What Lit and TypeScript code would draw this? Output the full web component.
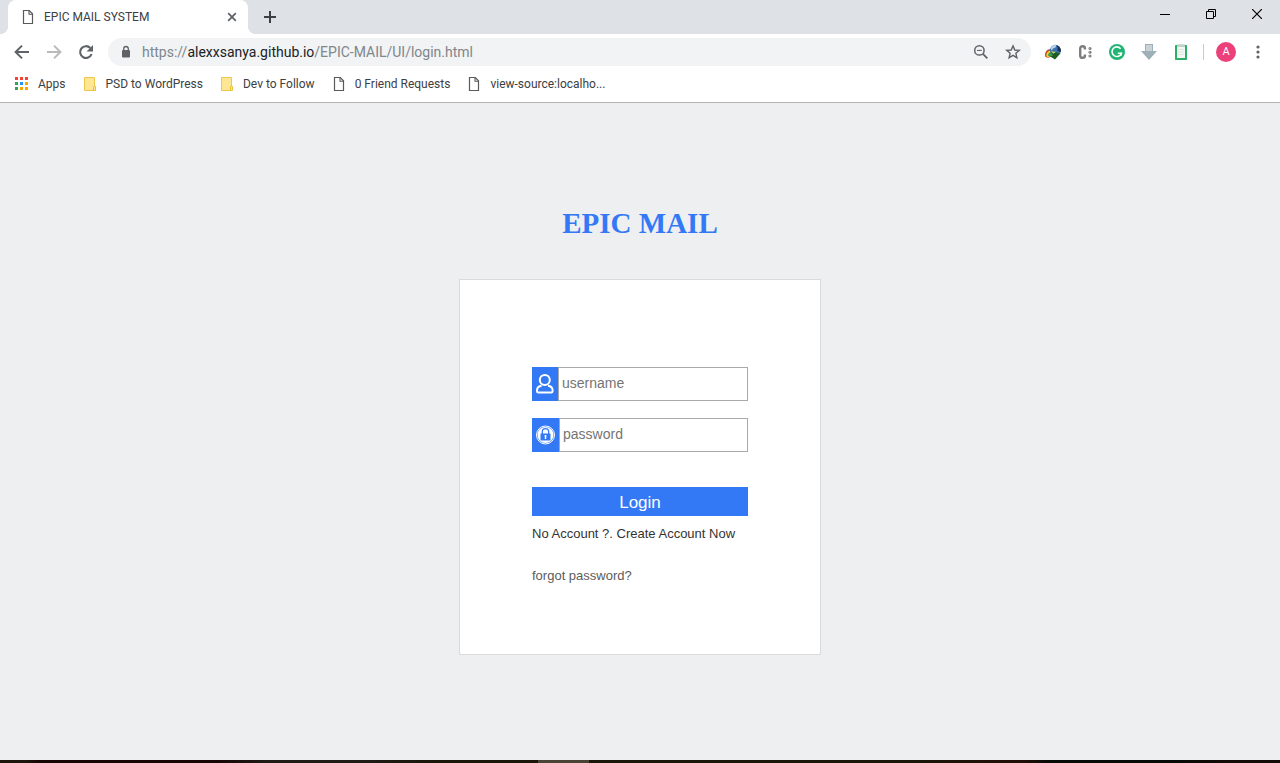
import { LitElement, html, css, svg } from "lit";
import { customElement, property } from "lit/decorators.js";

const pageIcon = html`<svg width="16" height="16" viewBox="0 0 16 16" fill="none" stroke="#5a5a5a" stroke-width="1.2" aria-hidden="true">
  <path d="M3.5 1.5H9.3L12.5 4.8V14.5H3.5Z" /><path d="M9 1.5V5.2H12.5" stroke-width="1.1" />
</svg>`;

const folderIcon = html`<svg width="16" height="16" viewBox="0 0 16 16" aria-hidden="true">
  <path d="M2.5 1.5H12.5V11L13.5 14.5H2.5Z" fill="#ffe694" stroke="#ecc94b" />
  <path d="M11.5 14.5V11.2Q11.5 10.5 12.2 10.5H13.6V13.2Q13.6 14.5 12.4 14.5Z" fill="#ffe694" stroke="#e8bf32" />
</svg>`;

const appColors = ["#f44336", "#f44336", "#f44336", "#34a058", "#2196f3", "#f4a800", "#34a058", "#f4a800", "#f4a800"];
const appsIcon = html`<svg width="16" height="16" viewBox="0 0 16 16" shape-rendering="crispEdges" aria-hidden="true">
  ${appColors.map((c, i) => svg`<rect x=${1 + (i % 3) * 5} y=${1 + Math.floor(i / 3) * 5} width="3" height="3" fill=${c} />`)}
</svg>`;

@customElement("browser-tabs")
class BrowserTabs extends LitElement {
  @property() heading = "";

  static styles = css`
    :host { display: flex; height: 34px; background: #dee1e6; font: 12px/16px Roboto, "Noto Sans", sans-serif; }
    .tab { position: relative; box-sizing: border-box; display: flex; align-items: center; gap: 8px; width: 240px; margin-left: 8px; padding: 0 8px 0 12px; background: #fff; border-radius: 8px 8px 0 0; color: #3c4043; }
    .tab::before, .tab::after { content: ""; position: absolute; bottom: 0; width: 8px; height: 8px; }
    .tab::before { left: -8px; background: radial-gradient(circle at 0 0, transparent 8px, #fff 8px); }
    .tab::after { right: -8px; background: radial-gradient(circle at 100% 0, transparent 8px, #fff 8px); }
    .title { flex: 1; white-space: nowrap; }
    button { display: flex; align-items: center; justify-content: center; border: 0; padding: 0; background: none; }
    .close { width: 16px; height: 16px; }
    .add { width: 28px; margin-left: 8px; }
    .controls { display: flex; margin-left: auto; height: 28px; }
    .controls button { width: 46px; }
  `;

  render() {
    return html`
      <div class="tab">
        ${pageIcon}
        <span class="title">${this.heading}</span>
        <button class="close" aria-label="Close tab">
          <svg width="10" height="10" viewBox="0 0 10 10" stroke="#5f6368" stroke-width="1.8"><path d="M1.2 1.2L8.8 8.8M8.8 1.2L1.2 8.8" /></svg>
        </button>
      </div>
      <button class="add" aria-label="New tab">
        <svg width="14" height="14" viewBox="0 0 14 14" stroke="#3c4043" stroke-width="2"><path d="M7 1V13M1 7H13" /></svg>
      </button>
      <div class="controls">
        <button aria-label="Minimize"><svg width="10" height="10" viewBox="0 0 10 10"><path d="M0 5.5H10" stroke="#000" /></svg></button>
        <button aria-label="Restore"><svg width="10" height="10" viewBox="0 0 10 10" fill="none" stroke="#000"><path d="M.5 2.5H7.5V9.5H.5ZM2.5 2.5V.5H9.5V7.5H7.5" /></svg></button>
        <button aria-label="Close window"><svg width="10" height="10" viewBox="0 0 10 10" stroke="#000" stroke-width="1.2"><path d="M0 0L10 10M10 0L0 10" /></svg></button>
      </div>
    `;
  }
}

@customElement("browser-toolbar")
class BrowserToolbar extends LitElement {
  static styles = css`
    :host { display: flex; align-items: center; height: 36px; padding: 0 6px; background: #fff; }
    button { display: flex; align-items: center; justify-content: center; flex: none; width: 32px; height: 28px; border: 0; padding: 0; background: none; }
    .address { flex: 1; display: flex; align-items: center; height: 28px; margin: 0 6px; padding: 0 2px 0 12px; border-radius: 14px; background: #f1f3f4; font: 14px/20px Roboto, "Noto Sans", sans-serif; color: #80868b; white-space: nowrap; }
    .address b { font-weight: 400; color: #202124; }
    .url { flex: 1; margin-left: 10px; }
    .divider { width: 1px; height: 16px; margin: 0 6px; background: #c8cacc; }
    .avatar span { width: 20px; border-radius: 50%; background: #ec407a; color: #fff; font: 11px/20px Roboto, sans-serif; }
  `;

  render() {
    return html`
      <button aria-label="Back"><svg width="16" height="16" viewBox="0 0 16 16" fill="none" stroke="#5f6368" stroke-width="2"><path d="M15 8H2.4M8 1.6L1.6 8L8 14.4" /></svg></button>
      <button aria-label="Forward"><svg width="16" height="16" viewBox="0 0 16 16" fill="none" stroke="#bababa" stroke-width="2"><path d="M1 8H13.6M8 1.6L14.4 8L8 14.4" /></svg></button>
      <button aria-label="Reload"><svg width="16" height="16" viewBox="0 0 16 16"><path d="M13.6 10A5.9 5.9 0 1 1 12.3 4" fill="none" stroke="#5f6368" stroke-width="2.1" /><path d="M15 1V7.4H8.6Z" fill="#5f6368" /></svg></button>
      <div class="address">
        <svg width="12" height="14" viewBox="0 0 12 14"><rect x="2" y="5" width="8" height="7.5" rx="1" fill="#5f6368" /><path d="M3.7 5.5V3.8A2.3 2.3 0 0 1 8.3 3.8V5.5" fill="none" stroke="#5f6368" stroke-width="1.3" /></svg>
        <span class="url">https://<b>alexxsanya.github.io</b>/EPIC-MAIL/UI/login.html</span>
        <button aria-label="Zoom"><svg width="16" height="16" viewBox="0 0 16 16" fill="none" stroke="#5f6368" stroke-width="1.5"><circle cx="6.4" cy="6.4" r="4.7" /><path d="M9.9 9.9L14.3 14.3" stroke-width="1.8" /><path d="M4 6.4H8.8" stroke-width="1.1" /></svg></button>
        <button aria-label="Bookmark this page"><svg width="16" height="16" viewBox="0 0 16 16"><path d="M8 1.9L9.8 6L14.3 6.4L10.9 9.3L11.9 13.7L8 11.4L4.1 13.7L5.1 9.3L1.7 6.4L6.2 6Z" fill="none" stroke="#5f6368" stroke-width="1.4" /></svg></button>
      </div>
      <button aria-label="Download manager"><svg width="16" height="16" viewBox="0 0 16 16">
        <path d="M6.5 5C2.5 4.5 0 7.5 0 11.2C0 13.2 2 14 4 13.6L8 12Z" fill="#c9482c" />
        <path d="M6.5 6.4C3.4 6.3 1.4 8.6 1.3 11.4C1.3 12.8 3 13.2 4.5 12.8L8 11Z" fill="#f2d02c" />
        <path d="M6.5 8C4.5 8.2 3 9.5 2.9 11.4L5 12.4L8 11Z" fill="#37a24a" />
        <circle cx="10.4" cy="6.3" r="5.5" fill="#3c6fae" />
        <path d="M5.6 4.8C6.4 2 9 .7 11.4 1.2L10.5 3.4L8 4.6L6.8 6.6Z" fill="#b6d4ec" />
        <path d="M11.4 1.2C14.6 1.8 16.5 5 15.6 8.2L12.3 6.5L12.8 3.7Z" fill="#1d2c4c" />
        <path d="M5.5 6.5Q8.5 10 12.5 8V9.4L15.8 9L10 15.6L4.5 12L8 11.4Z" fill="#1c5d20" />
        <path d="M5.5 6.2Q8.3 8.5 11.5 7.6L8.2 9.8Z" fill="#c5d95a" />
      </svg></button>
      <button aria-label="Code extension"><svg width="16" height="16" viewBox="0 0 16 16">
        <path d="M7.9 5.5V4.3Q7.9 2.2 5.6 2.2Q3.2 2.2 3.2 4.6V11.4Q3.2 13.8 5.6 13.8Q7.9 13.8 7.9 11.7V10.5" fill="none" stroke="#7d7d7d" stroke-width="2.4" />
        <g fill="#7d7d7d"><circle cx="13" cy="4.4" r="1.5" /><circle cx="13" cy="8.2" r="1.5" /><circle cx="13" cy="12" r="1.5" /></g>
        <path d="M11 4.4H13M11 8.2H13M11 12H13" stroke="#b5b5b5" />
      </svg></button>
      <button aria-label="Writing checker"><svg width="16" height="16" viewBox="0 0 16 16"><circle cx="8" cy="8" r="8" fill="#20b574" /><path d="M11.6 4.7A4.8 4.8 0 1 0 12.4 9.3H8.8" fill="none" stroke="#fff" stroke-width="1.6" /><path d="M12.2 8.6V11.8" stroke="#fff" stroke-width="1.2" /></svg></button>
      <button aria-label="Downloads"><svg width="16" height="16" viewBox="0 0 16 16">
        <path d="M4 0H12V7H16L8 16L0 7H4Z" fill="#9dafb8" /><path d="M5 1H11V7H5Z" fill="#cbd2d6" /><path d="M3 8H13L8 13.4Z" fill="#9fb0b8" />
      </svg></button>
      <button aria-label="Clipboard"><svg width="16" height="16" viewBox="0 0 16 16"><rect x="2" y="1" width="12" height="15" rx=".7" fill="#2bae66" /><rect x="4" y="3" width="8" height="11" fill="#f5f7f6" /><path d="M4 .3H12V3H4Z" fill="#bdd3c6" /><path d="M5.2 5.5H10.8M5.2 8H10.8M5.2 10.5H10.8" stroke="#d8dfdb" stroke-width=".8" /></svg></button>
      <span class="divider"></span>
      <button class="avatar" aria-label="Profile"><span>A</span></button>
      <button aria-label="Menu"><svg width="4" height="14" viewBox="0 0 4 14" fill="#5f6368"><circle cx="2" cy="2" r="1.6" /><circle cx="2" cy="7" r="1.6" /><circle cx="2" cy="12" r="1.6" /></svg></button>
    `;
  }
}

const bookmarks = [
  { icon: appsIcon, label: "Apps" },
  { icon: folderIcon, label: "PSD to WordPress" },
  { icon: folderIcon, label: "Dev to Follow" },
  { icon: pageIcon, label: "0 Friend Requests" },
  { icon: pageIcon, label: "view-source:localho..." },
];

@customElement("bookmark-bar")
class BookmarkBar extends LitElement {
  static styles = css`
    :host { display: flex; align-items: center; gap: 16px; height: 28px; padding: 0 14px 4px; border-bottom: 1px solid #b1b2b4; background: #fff; font: 12px/16px Roboto, "Noto Sans", sans-serif; }
    a { display: flex; align-items: center; gap: 8px; color: #3c4043; text-decoration: none; white-space: nowrap; }
  `;

  render() {
    return bookmarks.map((b) => html`<a href="#">${b.icon}<span>${b.label}</span></a>`);
  }
}

@customElement("login-page")
class LoginPage extends LitElement {
  static styles = css`
    :host { display: flex; flex-direction: column; align-items: center; padding-top: 104px; background: #eeeff1; font-family: "Liberation Sans", Arial, sans-serif; }
    h1 { margin: 0 0 40px; color: #3379f6; font: bold 29px/32px "Liberation Serif", "Times New Roman", serif; }
    form { box-sizing: border-box; width: 362px; max-width: 100%; padding: 87px 72px 70px; border: 1px solid #d9dadc; background: #fff; }
    .field { display: flex; height: 34px; margin-bottom: 17px; }
    .field label { display: flex; align-items: center; padding: 0 3px; background: #3379f6; }
    .field input { flex: 1; min-width: 0; box-sizing: border-box; margin: 0; padding: 0 3px 2px; border: 1px solid #a9a9a9; border-radius: 0; background: #fff; color: #333; font: 14px/16px "Liberation Sans", Arial, sans-serif; outline: 0; }
    input::placeholder { color: #757575; opacity: 1; }
    .submit { display: block; box-sizing: border-box; width: 100%; height: 29px; margin-top: 35px; padding: 2px 0 0; border: 0; background: #3379f6; color: #fff; font: 17px/20px "Liberation Sans", Arial, sans-serif; }
    .links { display: flex; flex-direction: column; align-items: flex-start; gap: 26px; margin-top: 10px; font-size: 13px; line-height: 16px; }
    a { text-decoration: none; white-space: nowrap; }
    .create { color: #333; }
    .forgot { color: #5c5c5c; }
  `;

  render() {
    return html`
      <h1>EPIC MAIL</h1>
      <form>
        <div class="field">
          <label for="user" aria-label="Username"><svg width="20" height="22" viewBox="0 0 20 22" fill="none" stroke="#fff" stroke-width="2"><circle cx="9.8" cy="7" r="5" /><path d="M6.6 12.8Q2 13.4 2 17.4V18.2Q2 19.4 3.4 19.4H16.2Q17.6 19.4 17.6 18.2V17.4Q17.6 13.4 13 12.8" /></svg></label>
          <input id="user" type="text" placeholder="username" />
        </div>
        <div class="field">
          <label for="pass" aria-label="Password"><svg width="21" height="22" viewBox="0 0 21 22"><circle cx="10.5" cy="11" r="9" fill="#3379f6" stroke="#fff" stroke-width="1" /><circle cx="10.5" cy="11" r="8" fill="#fff" /><rect x="5.5" y="9.6" width="10" height="6.8" rx=".5" fill="#3379f6" /><path d="M7.3 10V7.9A3.2 3.2 0 0 1 13.7 7.9V10" fill="none" stroke="#3379f6" stroke-width="1.3" /><path d="M10.5 11V15M9.6 12H11.4" stroke="#fff" stroke-width="1.4" /></svg></label>
          <input id="pass" type="password" placeholder="password" />
        </div>
        <button class="submit" type="button">Login</button>
        <div class="links">
          <a class="create" href="#">No Account ?. Create Account Now</a>
          <a class="forgot" href="#">forgot password?</a>
        </div>
      </form>
    `;
  }
}

@customElement("app-root")
class AppRoot extends LitElement {
  static styles = css`
    :host { display: flex; flex-direction: column; min-height: 100vh; }
    .page { flex: 1; }
    .taskbar { height: 3px; background: linear-gradient(90deg, #1c150b 0 2%, #160503 3% 17%, #1f1c17 21% 28%, #1a1509 34% 42%, #4a4336 42% 46%, #1a1509 46% 72%, #210d06 80%, #060a07 82% 92%, #120a05 96% 100%); }
  `;

  render() {
    return html`
      <browser-tabs heading="EPIC MAIL SYSTEM"></browser-tabs>
      <browser-toolbar></browser-toolbar>
      <bookmark-bar></bookmark-bar>
      <login-page class="page"></login-page>
      <div class="taskbar"></div>
    `;
  }
}
